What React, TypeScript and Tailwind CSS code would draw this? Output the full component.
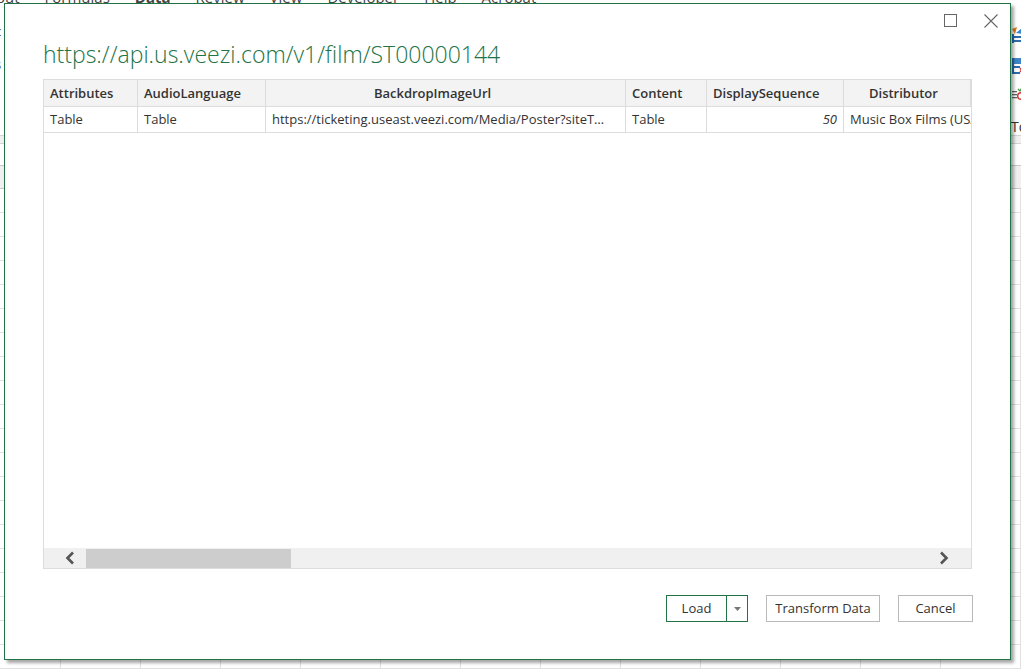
import type { ReactNode } from "react";

const columns = [
  { name: "Attributes", head: "", value: "Table" },
  { name: "AudioLanguage", head: "", value: "Table" },
  {
    name: "BackdropImageUrl",
    head: "pr-[32px] text-center",
    value: "https://ticketing.useast.veezi.com/Media/Poster?siteT…",
  },
  { name: "Content", head: "", value: "Table" },
  { name: "DisplaySequence", head: "", value: "50", numeric: true },
  { name: "Distributor", head: "pl-[25px]", value: "Music Box Films (USA)" },
];

const tabs = ["out", "Formulas", "Data", "Review", "View", "Developer", "Help", "Acrobat"];

function Cell({ children, className = "" }: { children: ReactNode; className?: string }) {
  return (
    <div className={`min-w-0 overflow-hidden whitespace-nowrap border-r border-[#dcdcdc] px-[6px] ${className}`}>
      {children}
    </div>
  );
}

function Chevron({ dir }: { dir: "left" | "right" }) {
  return (
    <svg width="10" height="14" viewBox="0 0 10 14" fill="none">
      <path
        d={dir === "left" ? "M8 1.5 2.5 7 8 12.5" : "M2 1.5 7.5 7 2 12.5"}
        stroke="#555"
        strokeWidth="2.6"
      />
    </svg>
  );
}

function ExcelBackdrop() {
  return (
    <div className="flex h-full flex-col">
      {/* ribbon */}
      <div className="relative h-[140px] border-b border-[#d4d4d4]">
        <div className="-mt-[13px] flex gap-[25px] text-[15px] leading-[20px] text-[#444]">
          {tabs.map((t, i) => (
            <span key={t} className={`${t === "Data" ? "font-bold" : ""} ${i === 0 ? "-ml-[4px]" : ""}`}>
              {t}
            </span>
          ))}
        </div>
        <div className="flex justify-between">
          <div className="-ml-[5px] flex flex-col pt-[8px] text-[13px] leading-[33px] text-[#444]">
            <span>c</span>
            <span>s</span>
          </div>
          <div className="flex w-[10px] flex-col pt-[18px]">
            <svg width="12" height="20" viewBox="0 0 12 20" className="shrink-0">
              <path d="M1 4 6 2 4 9Z" fill="#e07b1a" />
              <path d="M5 8 12 2 12 9Z" fill="#3f86c8" />
              <rect x="1" y="11" width="11" height="2" fill="#2b6cb0" />
              <rect x="1" y="15" width="11" height="2" fill="#2b6cb0" />
              <rect x="1" y="9" width="2" height="9" fill="#2b6cb0" />
            </svg>
            <svg width="12" height="24" viewBox="0 0 12 24" className="mt-[12px] shrink-0">
              <rect x="1" y="1" width="11" height="6" fill="#3f86c8" />
              <rect x="1" y="9" width="8" height="2" fill="#2b6cb0" />
              <rect x="1" y="1" width="2" height="16" fill="#2b6cb0" />
              <rect x="1" y="15" width="8" height="2" fill="#2b6cb0" />
              <path d="M9 11 12 15M12 11 9 15" stroke="#d33" strokeWidth="1.3" />
            </svg>
            <svg width="12" height="24" viewBox="0 0 12 24" className="mt-[2px] shrink-0">
              <path d="M7 6 9 8 12 3" stroke="#3a9a3a" strokeWidth="1.3" fill="none" />
              <rect x="1" y="8" width="5" height="1.3" fill="#666" />
              <rect x="1" y="11" width="5" height="1.3" fill="#666" />
              <rect x="1" y="14" width="5" height="1.3" fill="#666" />
              <circle cx="10" cy="13" r="3.3" stroke="#d33" strokeWidth="1.5" fill="none" />
            </svg>
            <span className="mt-[12px] text-[14px] leading-[16px] text-[#333]">To</span>
          </div>
        </div>
      </div>
      <div className="h-[10px] border-b border-[#d4d4d4] bg-[#f0f0f0]" />
      <div className="h-[30px] border-b border-[#c8c8c8] bg-white" />
      <div className="h-[32px] border-b border-[#c8c8c8] bg-[#f0f0f0]" />
      <div className="flex flex-col">
        {Array.from({ length: 20 }).map((_, r) => (
          <div key={r} className="flex h-[24px] shrink-0 border-b border-[#e1e1e1]">
            <div className="w-[61px] shrink-0 border-r border-[#e1e1e1]" />
            {Array.from({ length: 12 }).map((_, c) => (
              <div key={c} className="w-[80px] shrink-0 border-r border-[#e1e1e1]" />
            ))}
          </div>
        ))}
      </div>
    </div>
  );
}

export default function App() {
  return (
    <div className="relative h-[669px] w-[1021px] overflow-hidden bg-white font-['Open_Sans','Noto_Sans',sans-serif]">
      <ExcelBackdrop />

      {/* Navigator preview dialog */}
      <div className="absolute left-[4px] top-[3px] flex h-[657px] w-[1007px] flex-col border border-[#217346] bg-white shadow-[3px_3px_3px_rgba(0,0,0,0.35)]">
        <div className="flex h-[33px] shrink-0 items-center justify-end gap-[27px] pr-[12px]">
          <svg width="13" height="13" viewBox="0 0 13 13">
            <rect x="0.5" y="0.5" width="12" height="12" fill="none" stroke="#666" />
          </svg>
          <svg width="14" height="14" viewBox="0 0 14 14">
            <path d="M0.5 0.5 13.5 13.5M13.5 0.5 0.5 13.5" stroke="#666" strokeWidth="1.1" />
          </svg>
        </div>

        <div className="h-[42px] shrink-0 pl-[38px] pt-[2px] text-[23px] font-light leading-[30px] text-[#217346]">
          https://api.us.veezi.com/v1/film/ST00000144
        </div>

        <div className="mx-[38px] flex h-[490px] shrink-0 flex-col border border-[#dcdcdc] text-[13px] text-[#333]">
          <div className="grid h-[27px] shrink-0 grid-cols-[94px_128px_360px_81px_137px_1fr] border-b border-[#dcdcdc] bg-[#f3f3f3] font-semibold leading-[26px]">
            {columns.map((c) => (
              <Cell key={c.name} className={c.head}>
                {c.name}
              </Cell>
            ))}
          </div>
          <div className="grid h-[26px] shrink-0 grid-cols-[94px_128px_360px_81px_137px_1fr] border-b border-[#dcdcdc] leading-[25px]">
            {columns.map((c, i) => (
              <Cell
                key={c.name}
                className={`${c.numeric ? "text-right italic" : ""} ${i === 5 ? "border-r-0" : ""}`}
              >
                {c.value}
              </Cell>
            ))}
          </div>
          <div className="flex-1" />
          <div className="flex h-[20px] shrink-0 items-center bg-[#f0f0f0]">
            <div className="flex w-[48px] justify-center pl-[4px]">
              <Chevron dir="left" />
            </div>
            <div className="-ml-[6px] flex flex-1 items-center">
              <div className="h-[19px] w-[205px] bg-[#cdcdcd]" />
            </div>
            <div className="flex w-[54px] justify-center">
              <Chevron dir="right" />
            </div>
          </div>
        </div>

        <div className="mt-[26px] flex justify-end gap-[18px] pr-[37px] text-[13px] text-[#333]">
          <div className="flex h-[27px] border border-[#217346]">
            <button className="w-[60px] border-r border-[#217346] leading-[25px]">Load</button>
            <button className="flex w-[20px] items-center justify-center">
              <svg width="7" height="4" viewBox="0 0 7 4">
                <path d="M0 0h7L3.5 4Z" fill="#777" />
              </svg>
            </button>
          </div>
          <button className="h-[27px] w-[114px] border border-[#b9b9b9] leading-[25px]">Transform Data</button>
          <button className="h-[27px] w-[75px] border border-[#b9b9b9] leading-[25px]">Cancel</button>
        </div>
      </div>
    </div>
  );
}
